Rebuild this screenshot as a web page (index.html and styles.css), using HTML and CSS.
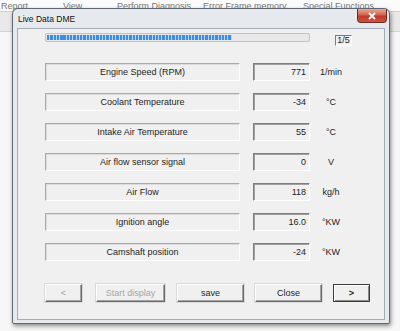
FILE: index.html
```html
<!DOCTYPE html>
<html lang="en">
<head>
    <meta charset="UTF-8">
    <title>Live Data DME</title>
    <link rel="stylesheet" href="styles.css">
</head>
<body>
    <!-- Application behind the dialog -->
    <div class="menubar">
        <span>Report</span>
        <span>View</span>
        <span>Perform Diagnosis</span>
        <span>Error Frame memory</span>
        <span>Special Functions</span>
    </div>
    <div class="toolbar"></div>

    <!-- Dialog window -->
    <div class="window">
        <div class="titlebar">
            <span class="title">Live Data DME</span>
            <button class="close-btn">
                <svg width="10" height="8" viewBox="0 0 10 8">
                    <path d="M2 1 L8 7 M8 1 L2 7" stroke="#fff" stroke-width="1.8" fill="none"/>
                </svg>
            </button>
        </div>
        <div class="client">
            <div class="progress-row">
                <div class="progress"><div class="progress-fill" style="width: 71%"></div></div>
                <div class="page-box">1/5</div>
            </div>

            <div class="rows">
                <div class="row">
                    <div class="label">Engine Speed (RPM)</div>
                    <div class="value">771</div>
                    <div class="unit">1/min</div>
                </div>
                <div class="row">
                    <div class="label">Coolant Temperature</div>
                    <div class="value">-34</div>
                    <div class="unit">°C</div>
                </div>
                <div class="row">
                    <div class="label">Intake Air Temperature</div>
                    <div class="value">55</div>
                    <div class="unit">°C</div>
                </div>
                <div class="row">
                    <div class="label">Air flow sensor signal</div>
                    <div class="value">0</div>
                    <div class="unit">V</div>
                </div>
                <div class="row">
                    <div class="label">Air Flow</div>
                    <div class="value">118</div>
                    <div class="unit">kg/h</div>
                </div>
                <div class="row">
                    <div class="label">Ignition angle</div>
                    <div class="value">16.0</div>
                    <div class="unit">°KW</div>
                </div>
                <div class="row">
                    <div class="label">Camshaft position</div>
                    <div class="value">-24</div>
                    <div class="unit">°KW</div>
                </div>
            </div>

            <div class="buttons">
                <button class="btn btn-small btn-prev" disabled>&lt;</button>
                <button class="btn btn-start" disabled>Start display</button>
                <button class="btn btn-wide">save</button>
                <button class="btn btn-wide">Close</button>
                <button class="btn btn-small btn-default">&gt;</button>
            </div>
        </div>
    </div>
</body>
</html>
```

FILE: styles.css
```css
body {
    margin: 0;
    width: 400px;
    height: 331px;
    overflow: hidden;
    position: relative;
    background: #f7f7f7;
    font-family: "Liberation Sans", Arial, sans-serif;
    font-size: 9px;
    color: #1e1e1e;
}

/* application behind */
.menubar {
    display: grid;
    grid-template-columns: 62px 54px 86px 100px auto;
    height: 11px;
    padding-left: 1px;
    line-height: 13px;
    color: #777;
    background: #fbfbfb;
    border-bottom: 1px solid #cfcfcf;
}
.toolbar {
    height: 19px;
    background: #e9e9e9;
    border-bottom: 1px solid #d4d4d4;
}

/* dialog */
.window {
    position: absolute;
    left: 12px;
    top: 8px;
    width: 378px;
    height: 316px;
    box-sizing: border-box;
    display: flex;
    flex-direction: column;
    padding: 0 4px 3px;
    border: 1px solid #5f6873;
    border-radius: 6px 6px 2px 2px;
    background: #e6eaef;
    box-shadow: 1px 2px 4px rgba(0, 0, 0, 0.45);
}
.titlebar {
    display: flex;
    align-items: flex-start;
    height: 19px;
    flex-shrink: 0;
}
.title {
    padding-left: 1px;
    line-height: 20px;
    font-size: 8.5px;
    color: #111;
}
.close-btn {
    margin-left: auto;
    margin-right: -2px;
    width: 30px;
    height: 14px;
    padding: 0;
    display: flex;
    align-items: center;
    justify-content: center;
    border: 1px solid #6e2d24;
    border-top: none;
    border-radius: 0 0 4px 4px;
    background: linear-gradient(#e8a898, #d26450 45%, #bf3a26 55%, #cc5540);
}

.client {
    flex: 1;
    box-sizing: border-box;
    padding: 4px 0 0 27px;
    border: 1px solid #a5aeb8;
    background: #f0f0f0;
}

/* progress */
.progress-row {
    display: flex;
    align-items: flex-start;
}
.progress {
    width: 265px;
    height: 9px;
    box-sizing: border-box;
    padding: 1px;
    border: 1px solid #c2c2c2;
    border-radius: 2px;
    background: #e8e8e8;
}
.progress-fill {
    height: 100%;
    background: repeating-linear-gradient(90deg, #3b8ee0 0 2.3px, #b9d5f1 2.3px 3.3px);
}
.page-box {
    margin: 2px 0 0 25px;
    width: 17px;
    height: 11px;
    box-sizing: border-box;
    border: 1px solid;
    border-color: #7c7c7c #fff #fff #7c7c7c;
    line-height: 9px;
    text-align: center;
}

/* values */
.rows {
    display: flex;
    flex-direction: column;
    gap: 12px;
    margin-top: 17px;
}
.row {
    display: flex;
    height: 18px;
}
.label {
    width: 195px;
    box-sizing: border-box;
    border: 1px solid;
    border-color: #aaa #fdfdfd #fdfdfd #aaa;
    box-shadow: inset 1px 1px 0 #dcdcdc;
    line-height: 16px;
    text-align: center;
}
.value {
    width: 57px;
    margin-left: 13px;
    box-sizing: border-box;
    padding-right: 3px;
    border: 1px solid;
    border-color: #7e7e7e #fff #fff #7e7e7e;
    box-shadow: inset 1px 1px 0 #a0a0a0;
    line-height: 16px;
    text-align: right;
}
.unit {
    width: 34px;
    margin-left: 4px;
    line-height: 18px;
    text-align: center;
}

/* buttons */
.buttons {
    display: flex;
    gap: 11px;
    margin-top: 23px;
}
.btn {
    height: 18px;
    padding: 0;
    font-family: inherit;
    font-size: 9px;
    color: #1e1e1e;
    background: #f0f0f0;
    border: 1px solid;
    border-color: #fff #6a6a6a #6a6a6a #fff;
    box-shadow: inset -1px -1px 0 #a3a3a3, 0 0 0 1px #dadada;
}
.btn:disabled {
    color: #a6a6a6;
}
.btn-small {
    width: 37px;
}
.btn-prev {
    margin-right: 3px;
}
.btn-start {
    width: 69px;
    margin-right: 1px;
}
.btn-wide {
    width: 67px;
}
.btn-default {
    border-color: #3c3c3c;
    box-shadow: inset 1px 1px 0 #fff, inset -1px -1px 0 #8a8a8a;
    font-weight: bold;
}
```
